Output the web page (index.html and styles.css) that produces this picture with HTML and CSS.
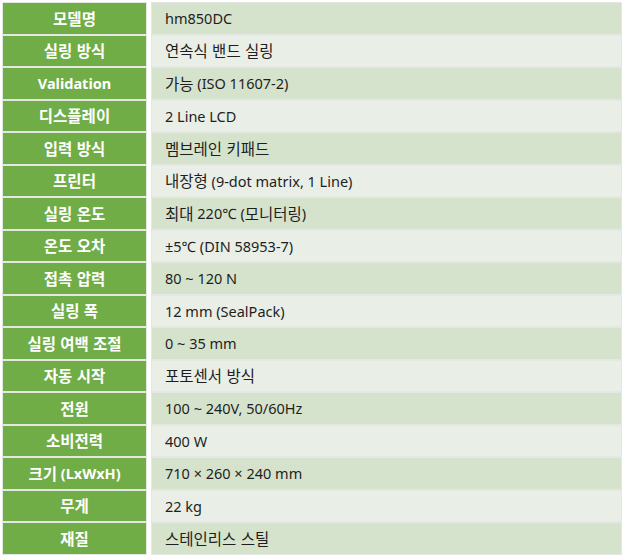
FILE: index.html
```html
<!DOCTYPE html>
<html lang="ko">
<head>
<meta charset="utf-8">
<link rel="stylesheet" href="styles.css">
</head>
<body>
<div class="spec">
  <div class="k"><span class="ko">모델명</span></div><div class="v odd">hm850DC</div>
  <div class="k"><span class="ko">실링 방식</span></div><div class="v even"><span class="ko">연속식 밴드 실링</span></div>
  <div class="k">Validation</div><div class="v odd"><span class="ko">가능</span>&nbsp;(ISO 11607-2)</div>
  <div class="k"><span class="ko">디스플레이</span></div><div class="v even">2 Line LCD</div>
  <div class="k"><span class="ko">입력 방식</span></div><div class="v odd"><span class="ko">멤브레인 키패드</span></div>
  <div class="k"><span class="ko">프린터</span></div><div class="v even"><span class="ko">내장형</span>&nbsp;(9-dot matrix, 1 Line)</div>
  <div class="k"><span class="ko">실링 온도</span></div><div class="v odd"><span class="ko">최대</span>&nbsp;220℃ (<span class="ko">모니터링</span>)</div>
  <div class="k"><span class="ko">온도 오차</span></div><div class="v even">±5℃ (DIN 58953-7)</div>
  <div class="k"><span class="ko">접촉 압력</span></div><div class="v odd">80 ~ 120 N</div>
  <div class="k"><span class="ko">실링 폭</span></div><div class="v even">12 mm (SealPack)</div>
  <div class="k"><span class="ko">실링 여백 조절</span></div><div class="v odd">0 ~ 35 mm</div>
  <div class="k"><span class="ko">자동 시작</span></div><div class="v even"><span class="ko">포토센서 방식</span></div>
  <div class="k"><span class="ko">전원</span></div><div class="v odd">100 ~ 240V, 50/60Hz</div>
  <div class="k"><span class="ko">소비전력</span></div><div class="v even">400 W</div>
  <div class="k"><span class="ko">크기</span>&nbsp;(LxWxH)</div><div class="v odd">710 × 260 × 240 mm</div>
  <div class="k"><span class="ko">무게</span></div><div class="v even">22 kg</div>
  <div class="k"><span class="ko">재질</span></div><div class="v odd"><span class="ko">스테인리스 스틸</span></div>
</div>
</body>
</html>
```
FILE: styles.css
```css
html, body {
  margin: 0;
  padding: 0;
  background: #ffffff;
}
body {
  font-family: "Noto Sans", "Noto Sans CJK KR", sans-serif;
  font-size: 14.5px;
}
.spec {
  display: grid;
  grid-template-columns: 143px 469px;
  grid-auto-rows: 30.5px;
  column-gap: 6px;
  row-gap: 2px;
  padding: 3px;
}
.k, .v {
  display: flex;
  align-items: center;
  box-sizing: border-box;
  outline: 1px solid #e4e7e2;
  white-space: pre;
}
.ko {
  font-family: "Noto Sans CJK KR", sans-serif;
  font-size: 15.5px;
  line-height: 1;
}
.k {
  background: #70ad47;
  color: #ffffff;
  font-weight: bold;
  justify-content: center;
}
.v {
  color: #1e1e1e;
  padding-left: 13px;
}
.v.odd {
  background: #d6e3cc;
}
.v.even {
  background: #e9efe7;
}
```
